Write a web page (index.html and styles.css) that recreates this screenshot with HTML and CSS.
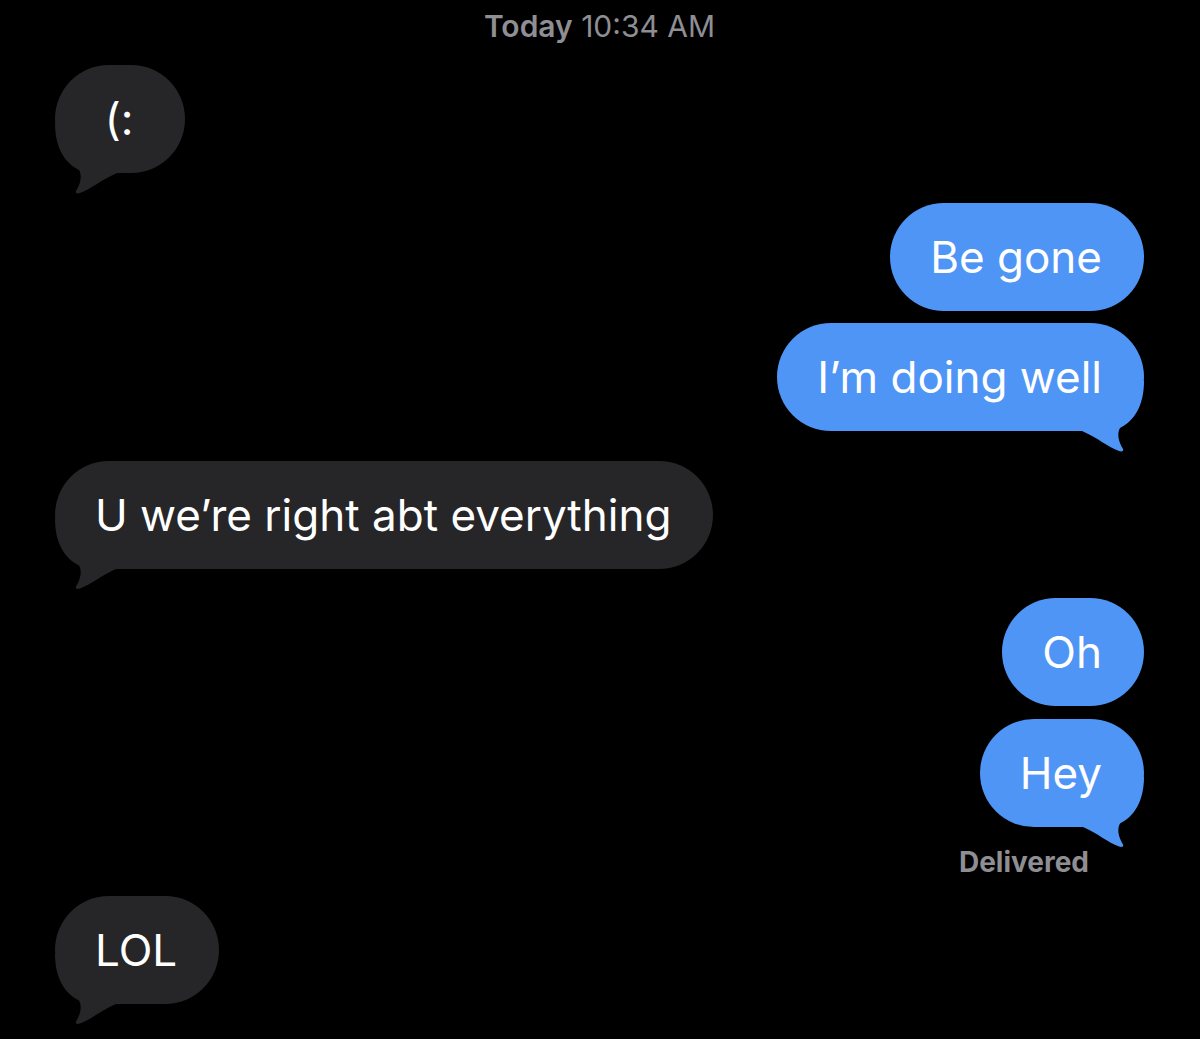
FILE: index.html
```html
<!DOCTYPE html>
<html lang="en">
<head>
  <meta charset="UTF-8">
  <title>Messages</title>
  <link rel="stylesheet" href="styles.css">
</head>
<body>
  <div class="thread">
    <div class="stamp"><strong>Today</strong> 10:34 AM</div>

    <div class="row them first">
      <div class="bubble tail">(:</div>
    </div>

    <div class="row me group">
      <div class="bubble">Be gone</div>
    </div>
    <div class="row me">
      <div class="bubble tail">I’m doing well</div>
    </div>

    <div class="row them group">
      <div class="bubble tail">U we’re right abt everything</div>
    </div>

    <div class="row me group">
      <div class="bubble">Oh</div>
    </div>
    <div class="row me">
      <div class="bubble tail">Hey</div>
    </div>
    <div class="status">Delivered</div>

    <div class="row them last">
      <div class="bubble tail">LOL</div>
    </div>
  </div>
</body>
</html>
```

FILE: styles.css
```css
html {
  background: #000;
}
body {
  margin: 0;
  font-family: "Inter", "Noto Sans", sans-serif;
  color: #fff;
}
.thread {
  display: flex;
  flex-direction: column;
  min-height: 100vh;
  box-sizing: border-box;
  padding: 8px 56px 40px 55px;
}
.stamp {
  text-align: center;
  color: #8e8e93;
  font-size: 30px;
  line-height: 36px;
  margin-bottom: 21px;
}
.stamp strong {
  font-weight: 600;
}
.row {
  display: flex;
  margin-top: 12.5px;
}
.row.first {
  margin-top: 0;
}
.row.group {
  margin-top: 29.5px;
}
.row.them {
  justify-content: flex-start;
}
.row.me {
  justify-content: flex-end;
}
.bubble {
  position: relative;
  min-width: 48px;
  padding: 27px 42px 27px 40px;
  border-radius: 54px;
  font-size: 44px;
  line-height: 54px;
  text-align: center;
  white-space: nowrap;
}
.them .bubble {
  background: #262628;
}
.me .bubble {
  background: #4f95f5;
}
/* the little hook under the last bubble of a run */
.bubble.tail::after {
  content: "";
  position: absolute;
  bottom: -22px;
  width: 62px;
  height: 72px;
  background: inherit;
  z-index: -1;
  clip-path: path("M 0 0 C 0 25, 10 40, 24 47 C 27 52, 26 60, 21 68 C 20 70, 22 71, 25 70 C 36 66, 46 57, 62 50 L 62 0 Z");
}
.them .bubble.tail::after {
  left: 0;
}
.me .bubble.tail::after {
  right: 0;
  transform: scaleX(-1);
}
.status {
  align-self: flex-end;
  margin: 18px 55px 0 0;
  color: #8e8e93;
  font-size: 28px;
  line-height: 34px;
  font-weight: 700;
}
.row.last {
  margin-top: 17px;
}
```
